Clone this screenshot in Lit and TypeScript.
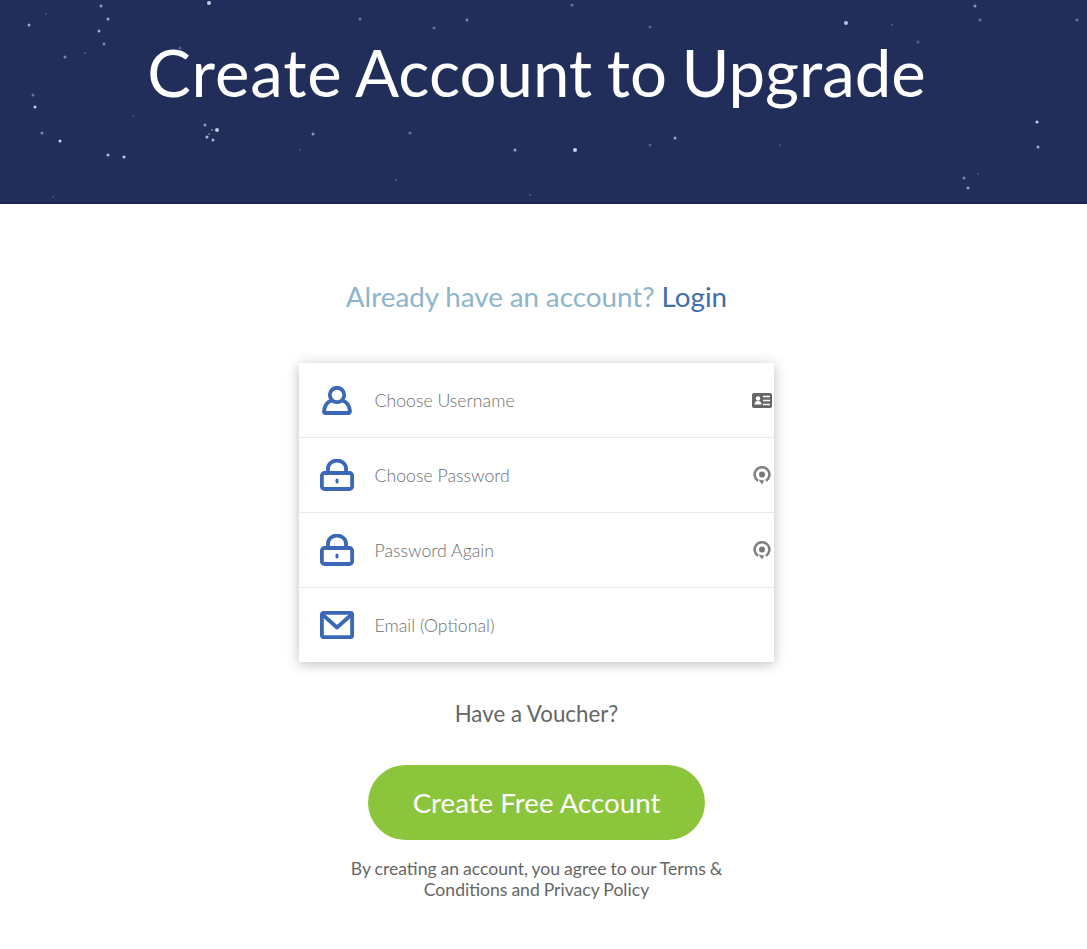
import { LitElement, html, css, svg } from "lit";
import { customElement } from "lit/decorators.js";

const STARS: [number, number, number, number][] = [
  [29,25,3,.7],[101,6,3,.6],[108,19,3,.7],[99,31,3,.7],[104,44,3,.5],[65,57,3,.5],[46,14,2,.2],[33,95,3,.4],[35,107,3,.95],[42,133,3,.5],
  [60,141,3,.95],[108,155,3,.8],[124,157,3,.9],[205,125,3,.6],[217,130,4,.9],[212,130,2,.5],[207,137,3,.8],[213,140,3,.8],[209,134,2,.4],
  [313,134,3,.6],[209,3,4,.9],[85,53,2,.3],[180,48,3,.3],[133,116,2,.2],[300,150,2,.2],[53,197,2,.2],
  [467,20,3,.5],[434,28,3,.4],[572,5,3,.4],[410,133,3,.4],[515,150,3,.7],[575,150,4,.95],[675,138,3,.7],[650,145,3,.3],[360,19,3,.4],
  [650,27,3,.3],[396,180,2,.3],[530,195,2,.3],
  [846,23,4,.85],[975,6,3,.6],[980,20,3,.4],[918,42,3,.3],[892,25,2,.3],[780,145,2,.2],[1037,122,3,.95],[1038,147,3,.7],[964,178,3,.5],
  [968,188,3,.7],[978,174,2,.2],[1077,20,3,.4],
];

@customElement("app-root")
export class AppRoot extends LitElement {
  static styles = css`
    :host { display: block; font-family: Lato, "Liberation Sans", sans-serif; background: #fff; min-height: 949px; }
    .hero { position: relative; height: 202px; padding-right: 14px; background: #212e5a; border-bottom: 2px solid #182350; overflow: hidden; display: flex; justify-content: center; }
    .stars { position: absolute; left: 0; top: 0; width: 1087px; height: 202px; filter: blur(.6px); }
    h1 { position: relative; margin: 30px 0 0; font-size: 65.3px; word-spacing: -2.3px; line-height: 84px; font-weight: 400; color: #fff; white-space: nowrap; }
    .first { letter-spacing: .9px; }
    main { display: flex; flex-direction: column; align-items: center; padding-right: 14px; }
    .already { margin: 77px 0 0; font-size: 27.8px; word-spacing: -.3px; line-height: 32px; color: #8db5cd; }
    .already a { color: #3f6ea9; text-decoration: none; }
    .card { width: 475px; margin-top: 50px; background: #fff; box-shadow: 0 2px 12px rgba(0,0,0,.26); }
    .row { height: 74px; display: flex; align-items: center; position: relative; border-bottom: 1px solid #e8e8e8; }
    .row:last-child { height: 74px; border-bottom: 0; }
    .ico { width: 75.5px; flex: none; display: flex; justify-content: center; }
    .ph { font-size: 17.7px; font-weight: 300; color: #6f6f6f; }
    .side { position: absolute; right: 1px; top: 30px; width: 22px; height: 20px; display: flex; justify-content: center; }
    .side.eye { top: 28px; right: 1px; }
    .voucher { margin: 38px 0 0; font-size: 22.3px; line-height: 28px; color: #666; }
    .btn { margin-top: 37px; width: 337px; height: 75px; border: 0; border-radius: 38px; background: #8ac53b; color: #fff; font: 400 27.7px Lato, sans-serif; }
    .terms { margin: 18px 0 0; width: 400px; text-align: center; font-size: 17.6px; word-spacing: -.6px; line-height: 21px; color: #666; }
  `;

  private user() {
    return html`<svg width="30" height="29" viewBox="0 0 30 29" fill="none" stroke="#3b68b6" stroke-width="3.800" stroke-linejoin="round">
      <circle cx="15" cy="9" r="7.200"/><path d="M9.500 14.500C5 16 2.500 19.500 2 25.500a1.500 1.500 0 0 0 1.500 1.500h23a1.500 1.500 0 0 0 1.500-1.500C27.500 19.500 25 16 20.500 14.500"/></svg>`;
  }
  private lock() {
    return html`<svg width="34" height="32" viewBox="0 0 34 32" fill="none" stroke="#3b68b6" stroke-width="3.800">
      <path d="M8 13.500V9.500a9 8 0 0 1 18 0V13.500"/><rect x="1.900" y="14" width="30.200" height="16" rx="2.500"/>
      <rect x="15.500" y="19.500" width="3" height="5" rx="1.500" fill="#3b68b6" stroke="none"/></svg>`;
  }
  private mail() {
    return html`<svg width="34" height="28" viewBox="0 0 34 28" fill="none" stroke="#3b68b6" stroke-width="3.800" stroke-linejoin="round">
      <rect x="1.900" y="1.900" width="30.200" height="24.200" rx="1.500"/><path d="M3 4 17 16.500 31 4"/></svg>`;
  }
  private idCard() {
    return html`<svg width="20" height="15" viewBox="0 0 20 15"><rect width="20" height="15" rx="2" fill="#666"/>
      <circle cx="6" cy="5.500" r="2.200" fill="#fff"/><path d="M2.500 11.500c0-2.500 1.500-3.500 3.500-3.500s3.500 1 3.500 3.500z" fill="#fff"/>
      <path d="M11 3.500h7M11 7.500h7M11 11.500h7" stroke="#fff" stroke-width="1.500"/></svg>`;
  }
  private eye() {
    return html`<svg width="18" height="19" viewBox="0 0 18 19" fill="none"><path d="M5 14.800A7.400 7.400 0 1 1 13 14.800" stroke="#808080" stroke-width="2.600"/>
      <circle cx="9" cy="8.500" r="3" fill="#777"/><path d="M5.500 13.500 9 18.500l2-3.500h2z" fill="#808080"/></svg>`;
  }

  render() {
    return html`
      <header class="hero">
        <svg class="stars" viewBox="0 0 1087 202">
          ${STARS.map(([x, y, s, o]) => svg`<circle cx=${x} cy=${y} r=${s / 2} fill="#d5dcf2" opacity=${o}/>`)}
        </svg>
        <h1><span class="first">Create</span> Account to Upgrade</h1>
      </header>
      <main>
        <p class="already">Already have an account? <a href="#">Login</a></p>
        <div class="card">
          <div class="row"><div class="ico">${this.user()}</div><span class="ph">Choose Username</span><div class="side">${this.idCard()}</div></div>
          <div class="row"><div class="ico">${this.lock()}</div><span class="ph">Choose Password</span><div class="side eye">${this.eye()}</div></div>
          <div class="row"><div class="ico">${this.lock()}</div><span class="ph">Password Again</span><div class="side eye">${this.eye()}</div></div>
          <div class="row"><div class="ico">${this.mail()}</div><span class="ph">Email (Optional)</span></div>
        </div>
        <p class="voucher">Have a Voucher?</p>
        <button class="btn">Create Free Account</button>
        <p class="terms">By creating an account, you agree to our Terms &amp; Conditions and Privacy Policy</p>
      </main>
    `;
  }
}
